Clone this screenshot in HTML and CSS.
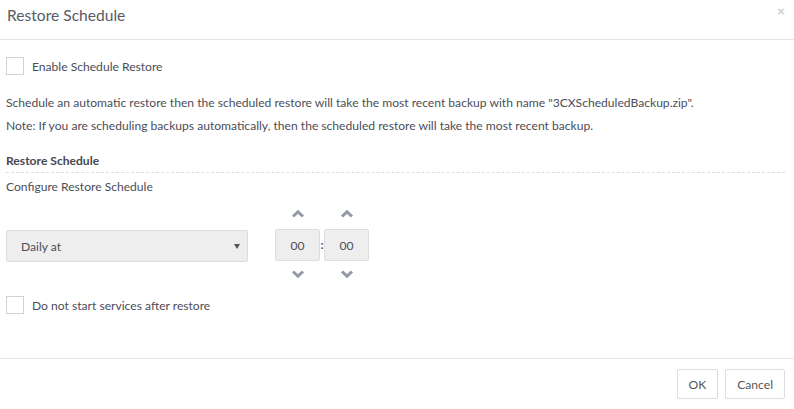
FILE: index.html
```html
<!DOCTYPE html>
<html>
<head>
<meta charset="utf-8">
<link rel="stylesheet" href="styles.css">
</head>
<body>
<div class="modal">
  <div class="header">
    <h4 class="title">Restore Schedule</h4>
    <span class="close">×</span>
  </div>
  <div class="body">
    <label class="check first"><span class="box"></span>Enable Schedule Restore</label>
    <p class="text t1">Schedule an automatic restore then the scheduled restore will take the most recent backup with name "3CXScheduledBackup.zip".</p>
    <p class="text t2">Note: If you are scheduling backups automatically, then the scheduled restore will take the most recent backup.</p>
    <div class="section">Restore Schedule</div>
    <div class="sub">Configure Restore Schedule</div>
    <div class="row">
      <div class="select"><span>Daily at</span><span class="caret"></span></div>
      <div class="time">
        <div class="spin">
          <svg class="chev up" width="14" height="9" viewBox="0 0 14 9"><path d="M2 7.5 L7 2.8 L12 7.5" fill="none" stroke="#939aa3" stroke-width="3"/></svg>
          <div class="tbox">00</div>
          <svg class="chev down" width="14" height="9" viewBox="0 0 14 9"><path d="M2 1.5 L7 6.2 L12 1.5" fill="none" stroke="#939aa3" stroke-width="3"/></svg>
        </div>
        <span class="colon">:</span>
        <div class="spin">
          <svg class="chev up" width="14" height="9" viewBox="0 0 14 9"><path d="M2 7.5 L7 2.8 L12 7.5" fill="none" stroke="#939aa3" stroke-width="3"/></svg>
          <div class="tbox">00</div>
          <svg class="chev down" width="14" height="9" viewBox="0 0 14 9"><path d="M2 1.5 L7 6.2 L12 1.5" fill="none" stroke="#939aa3" stroke-width="3"/></svg>
        </div>
      </div>
    </div>
    <label class="check second"><span class="box"></span>Do not start services after restore</label>
  </div>
  <div class="footer">
    <button class="btn">OK</button>
    <button class="btn">Cancel</button>
  </div>
</div>
</body>
</html>
```
FILE: styles.css
```css
* { box-sizing: border-box; }
html, body { margin: 0; padding: 0; background: #fff; }
body { font-family: "Source Sans Pro", Lato, "Noto Sans", sans-serif; font-size: 12.1px; color: #4d4d57; }
.modal { width: 794px; height: 409px; display: flex; flex-direction: column; }
.header { height: 40px; border-bottom: 1px solid #e5e5e5; display: flex; align-items: center; justify-content: space-between; padding: 0 9px 0 7px; }
.title { margin: 0; font-size: 15.6px; font-weight: 400; color: #5a5a64; position: relative; top: -5px; }
.close { color: #ccc; font-size: 14px; font-weight: 700; position: relative; top: -9px; }
.body { padding: 0 9px 0 6px; flex: 1; }
.check { display: flex; align-items: center; gap: 8px; }
.box { width: 18px; height: 18px; border: 1px solid #ccd3d3; background: #fff; display: inline-block; }
.first { margin-top: 17px; }
.text { margin: 0; line-height: 23px; }
.t1 { margin-top: 16px; }
.section { margin-top: 14px; font-weight: 700; color: #484850; padding-bottom: 2px; border-bottom: 1px dashed #ddd; line-height: 19px; }
.sub { margin-top: 3px; line-height: 22px; }
.row { display: flex; align-items: flex-start; margin-top: 11px; }
.select { margin-top: 21px; width: 242px; height: 32px; background: #eee; border: 1px solid #ddd; border-radius: 2px; display: flex; align-items: center; justify-content: space-between; padding: 0 7px 0 14px; }
.caret { width: 0; height: 0; border-left: 3px solid transparent; border-right: 3px solid transparent; border-top: 5px solid #555; }
.time { display: flex; align-items: center; margin-left: 27px; }
.spin { display: flex; flex-direction: column; align-items: center; }
.chev { display: block; }
.chev.up { margin-bottom: 11px; }
.chev.down { margin-top: 9px; }
.tbox { width: 45px; height: 32px; background: #eee; border: 1px solid #ddd; border-radius: 2px; display: flex; align-items: center; justify-content: center; }
.colon { width: 4px; text-align: center; font-weight: 700; }
.second { margin-top: 17px; }
.footer { height: 51px; border-top: 1px solid #e5e5e5; display: flex; justify-content: flex-end; align-items: center; gap: 7px; padding: 0 9px 0 0; }
.btn { font: inherit; font-size: 12.1px; color: #555; background: #fff; border: 1px solid #ddd; border-radius: 2px; height: 30px; padding: 0 11px; }
```
